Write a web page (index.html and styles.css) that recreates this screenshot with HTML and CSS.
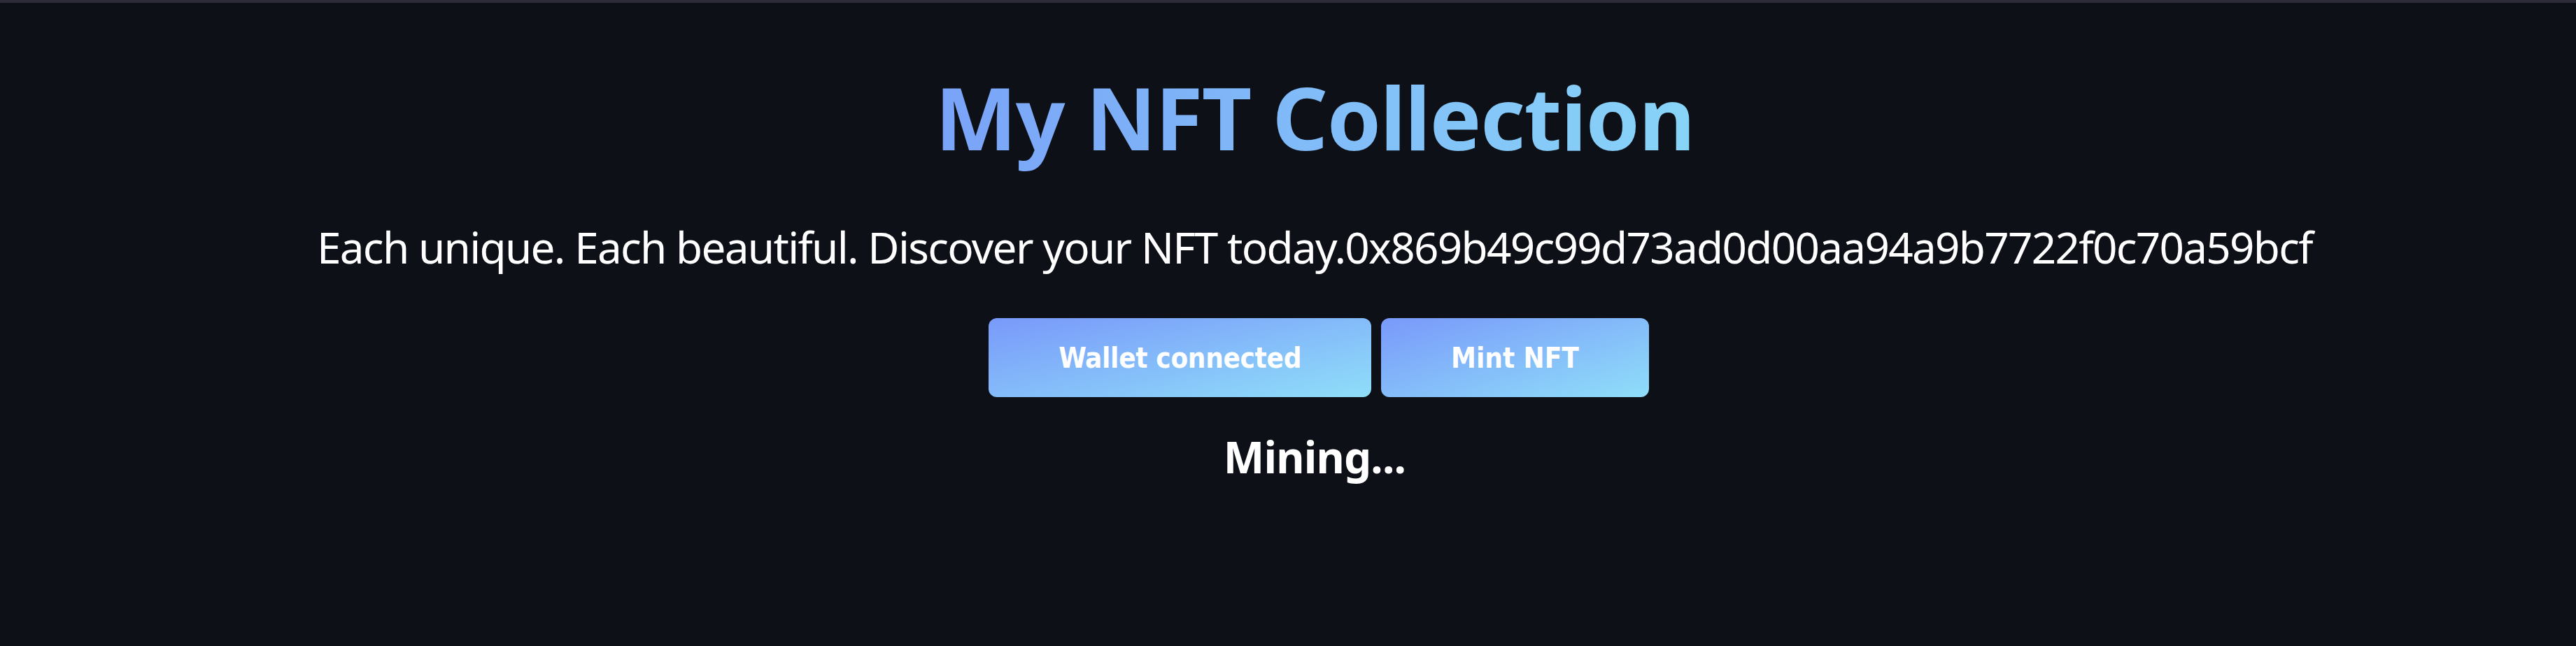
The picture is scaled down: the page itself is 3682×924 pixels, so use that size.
FILE: index.html
```html
<!DOCTYPE html>
<html lang="en">
<head>
<meta charset="utf-8">
<title>My NFT Collection</title>
<link rel="stylesheet" href="styles.css">
</head>
<body>
<div class="topbar"></div>
<main class="app">
  <h1 class="header gradient-text">My NFT Collection</h1>
  <p class="sub-text">Each unique. Each beautiful. Discover your NFT today.0x869b49c99d73ad0d00aa94a9b7722f0c70a59bcf</p>
  <div class="actions">
    <button class="cta-button wide">Wallet connected</button>
    <button class="cta-button">Mint NFT</button>
  </div>
  <p class="status">Mining...</p>
</main>
</body>
</html>
```

FILE: styles.css
```css
html, body {
  margin: 0;
  padding: 0;
  background: #0d1117;
  height: 100%;
}
body {
  font-family: "Noto Sans", "Open Sans", sans-serif;
  color: #ffffff;
}
.topbar {
  height: 4px;
  background: #2d2b38;
}
.app {
  display: flex;
  flex-direction: column;
  align-items: center;
  text-align: center;
  padding-left: 76px;
}
.header {
  margin: 101px 0 0;
  padding-bottom: 30px;
  font-size: 124px;
  line-height: 124px;
  font-weight: 700;
  letter-spacing: -1.5px;
}
.gradient-text {
  background: linear-gradient(to right, #7aa3f8, #88d4f8);
  -webkit-background-clip: text;
  background-clip: text;
  color: transparent;
}
.sub-text {
  margin: 63px 0 0;
  font-size: 62px;
  line-height: 62px;
  font-weight: 400;
  letter-spacing: -1.7px;
}
.actions {
  display: flex;
  gap: 14px;
  margin: 71px 0 0 12px;
}
.cta-button {
  height: 113px;
  padding: 0 100px;
  border: 0;
  border-radius: 12px;
  background: linear-gradient(to bottom right, #7999fa 0%, #8fdef9 100%);
  color: #ffffff;
  font-family: "DejaVu Sans", sans-serif;
  font-stretch: condensed;
  font-weight: 700;
  font-size: 40px;
}
.cta-button.wide {
  letter-spacing: -0.3px;
}
.status {
  margin: 54px 0 0;
  font-size: 62px;
  line-height: 62px;
  font-weight: 700;
  letter-spacing: -0.8px;
}
```
